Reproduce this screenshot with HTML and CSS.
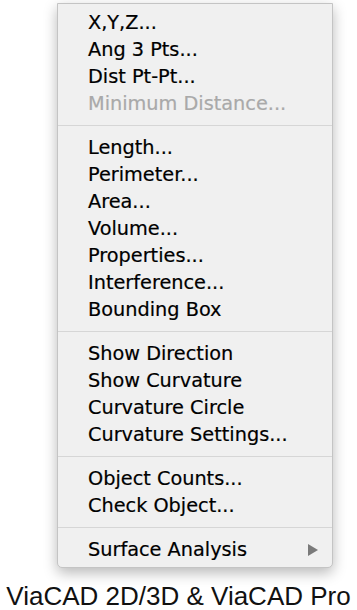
FILE: index.html
```html
<!DOCTYPE html>
<html>
<head>
<meta charset="utf-8">
<link rel="stylesheet" href="styles.css">
</head>
<body>
<div class="stage">
  <div class="menu">
    <div class="item">X,Y,Z...</div>
    <div class="item">Ang 3 Pts...</div>
    <div class="item">Dist Pt-Pt...</div>
    <div class="item disabled">Minimum Distance...</div>
    <div class="sep"></div>
    <div class="item">Length...</div>
    <div class="item">Perimeter...</div>
    <div class="item">Area...</div>
    <div class="item">Volume...</div>
    <div class="item">Properties...</div>
    <div class="item">Interference...</div>
    <div class="item">Bounding Box</div>
    <div class="sep"></div>
    <div class="item">Show Direction</div>
    <div class="item">Show Curvature</div>
    <div class="item">Curvature Circle</div>
    <div class="item">Curvature Settings...</div>
    <div class="sep"></div>
    <div class="item">Object Counts...</div>
    <div class="item">Check Object...</div>
    <div class="sep"></div>
    <div class="item submenu">
      <span>Surface Analysis</span>
      <svg class="arrow" width="10" height="12" viewBox="0 0 10 12"><path d="M0 0 L10 6 L0 12 Z" fill="#7a7a7a"/></svg>
    </div>
  </div>
</div>
<div class="caption">ViaCAD 2D/3D &amp; ViaCAD Pro</div>
</body>
</html>
```

FILE: styles.css
```css
html, body {
  margin: 0;
  padding: 0;
  background: #ffffff;
}
.stage {
  padding: 3px 0 0 57px;
}
.menu {
  width: 274px;
  background: #f0f0f0;
  border: 1px solid #c4c4c4;
  border-radius: 0 0 5px 5px;
  padding: 5px 0 4px 0;
  box-shadow: 0 5px 14px rgba(0, 0, 0, 0.28);
  font-family: "DejaVu Sans", sans-serif;
  font-size: 19.3px;
}
.item {
  height: 27px;
  line-height: 27px;
  padding-left: 30px;
  color: #000000;
  -webkit-text-stroke: 0.2px currentColor;
  white-space: nowrap;
}
.item.disabled {
  color: #a9a9a9;
}
.submenu {
  display: flex;
  align-items: center;
  justify-content: space-between;
  padding-right: 14px;
}
.sep {
  height: 1px;
  background: #d6d6d6;
  margin: 8px 0;
}
.caption {
  margin-top: 13px;
  text-align: center;
  font-family: "Liberation Sans", Arial, sans-serif;
  font-size: 26px;
  line-height: 30px;
  color: #111111;
}
```
